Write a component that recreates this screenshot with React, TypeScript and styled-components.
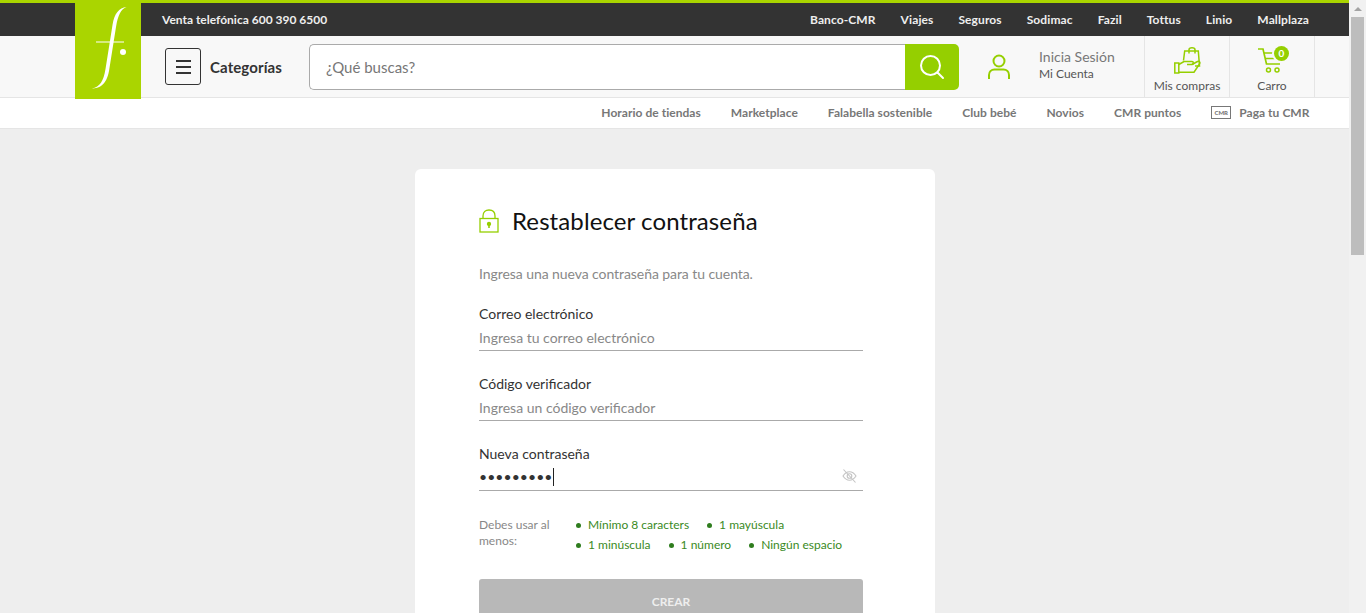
import React from 'react';
import styled, { createGlobalStyle } from 'styled-components';

const GlobalStyle = createGlobalStyle`
  html, body {
    margin: 0;
    height: 100%;
    overflow: hidden;
  }
  * {
    box-sizing: border-box;
  }
`;

const topLinks = ['Banco-CMR', 'Viajes', 'Seguros', 'Sodimac', 'Fazil', 'Tottus', 'Linio', 'Mallplaza'];
const subLinks = ['Horario de tiendas', 'Marketplace', 'Falabella sostenible', 'Club bebé', 'Novios', 'CMR puntos'];
const rules = ['Mínimo 8 caracters', '1 mayúscula', '1 minúscula', '1 número', 'Ningún espacio'];

const LogoMark = () => (
  <svg width="66" height="96" viewBox="0 0 66 96">
    <path
      d="M51.5 4C44 5 39.500 10 37.500 22L30.500 66C28.500 78 25 84 17 85.500C24 85.500 31.500 82 34 68L41 24C43 12 46 6 51.500 4Z"
      fill="#fff"
    />
    <rect x="21" y="38.500" width="28" height="1" fill="#fff" />
    <circle cx="48" cy="49" r="3" fill="#fff" />
  </svg>
);

const SearchIcon = () => (
  <svg width="26" height="26" viewBox="0 0 26 26" fill="none" stroke="#fff" strokeWidth="2">
    <circle cx="11.500" cy="11.500" r="9.500" />
    <path d="M18.500 18.500L24 24" strokeLinecap="round" />
  </svg>
);

const UserIcon = () => (
  <svg width="22" height="26" viewBox="0 0 22 26" fill="none" stroke="#95cf00" strokeWidth="2">
    <circle cx="11" cy="7" r="5.500" />
    <path d="M1 25V21C1 17.500 3.500 15.500 6.500 15.500H15.500C18.500 15.500 21 17.500 21 21V25" />
  </svg>
);

const BagIcon = () => (
  <svg width="27" height="27" viewBox="0 0 27 27" fill="none" stroke="#95cf00" strokeWidth="1.500">
    <path d="M9.500 13.500L10.700 4H24.300L25.500 19H21" />
    <path d="M15 6.500V2.800C15 1.500 16 0.800 18 0.800C20 0.800 21 1.500 21 2.800V6.500" />
    <rect x="0.800" y="16" width="4" height="10" />
    <path d="M4.800 17.500L10 14.500H18C19.800 14.500 19.800 17.500 18 17.500H13" />
    <path d="M18 17.500L23.500 14.500C25.500 13.800 26.500 15.500 25.500 17L20 25.200H4.800" />
  </svg>
);

const CartIcon = () => (
  <svg width="26" height="26" viewBox="0 0 26 26" fill="none" stroke="#95cf00" strokeWidth="1.500">
    <path d="M1 1H6L9.500 16H23" strokeWidth="1.700" />
    <path d="M7 5H24M8 10.500H24" />
    <circle cx="11.500" cy="22" r="2" />
    <circle cx="20" cy="22" r="2" />
  </svg>
);

const LockIcon = () => (
  <svg width="20" height="24" viewBox="0 0 20 24" fill="none" stroke="#95cf00" strokeWidth="1.300">
    <path d="M4 9.500V7C4 3 6.500 1 10 1C13.500 1 16 3 16 7V9.500" />
    <rect x="1" y="9.500" width="18" height="13.500" />
    <circle cx="10" cy="15" r="1.500" fill="#95cf00" />
    <path d="M10 16V19" strokeWidth="1.600" />
  </svg>
);

const EyeOffIcon = () => (
  <svg width="15" height="14" viewBox="0 0 15 14" fill="none" stroke="#c4c4c4" strokeWidth="1.100">
    <path d="M1 7C3 4 5 2.800 7.500 2.800C10 2.800 12 4 14 7C12 10 10 11.200 7.500 11.200C5 11.200 3 10 1 7Z" />
    <circle cx="7.500" cy="7" r="2.300" />
    <path d="M1.500 0.500L13.500 13.500" />
  </svg>
);

const App: React.FC = () => {
  return (
    <Viewport>
      <GlobalStyle />
      <Page>
        <Logo>
          <LogoMark />
        </Logo>
        <TopBar>
          <Phone>Venta telefónica 600 390 6500</Phone>
          <TopNav>
            {topLinks.map((link) => (
              <TopLink key={link}>{link}</TopLink>
            ))}
          </TopNav>
        </TopBar>
        <Header>
          <MenuButton>
            <MenuLine />
            <MenuLine />
            <MenuLine />
          </MenuButton>
          <MenuLabel>Categorías</MenuLabel>
          <Search>
            <SearchInput placeholder="¿Qué buscas?" />
            <SearchButton>
              <SearchIcon />
            </SearchButton>
          </Search>
          <Account>
            <UserIcon />
            <AccountText>
              <AccountTitle>Inicia Sesión</AccountTitle>
              <AccountSub>Mi Cuenta</AccountSub>
            </AccountText>
          </Account>
          <HeaderTile>
            <BagIcon />
            <TileLabel>Mis compras</TileLabel>
          </HeaderTile>
          <HeaderTile>
            <CartWrap>
              <CartIcon />
              <CartBadge>0</CartBadge>
            </CartWrap>
            <TileLabel>Carro</TileLabel>
          </HeaderTile>
        </Header>
        <SubNav>
          {subLinks.map((link) => (
            <SubLink key={link}>{link}</SubLink>
          ))}
          <SubLink>
            <CmrChip>CMR</CmrChip>
            Paga tu CMR
          </SubLink>
        </SubNav>
        <Main>
          <Card>
            <CardTitle>
              <LockIcon />
              <TitleText>Restablecer contraseña</TitleText>
            </CardTitle>
            <Intro>Ingresa una nueva contraseña para tu cuenta.</Intro>
            <Field>
              <FieldLabel>Correo electrónico</FieldLabel>
              <FieldInput placeholder="Ingresa tu correo electrónico" />
            </Field>
            <Field>
              <FieldLabel>Código verificador</FieldLabel>
              <FieldInput placeholder="Ingresa un código verificador" />
            </Field>
            <Field>
              <FieldLabel>Nueva contraseña</FieldLabel>
              <PasswordRow>
                <PasswordValue>•••••••••</PasswordValue>
                <EyeSlot>
                  <EyeOffIcon />
                </EyeSlot>
              </PasswordRow>
            </Field>
            <Rules>
              <RulesLabel>Debes usar al menos:</RulesLabel>
              <RulesList>
                {rules.map((rule) => (
                  <Rule key={rule}>{rule}</Rule>
                ))}
              </RulesList>
            </Rules>
            <SubmitButton>CREAR</SubmitButton>
          </Card>
        </Main>
      </Page>
      <Scrollbar>
        <ScrollArrow />
        <ScrollThumb />
      </Scrollbar>
    </Viewport>
  );
};

const Viewport = styled.div`
  display: flex;
  height: 100vh;
  overflow: hidden;
  font-family: 'Lato', sans-serif;
  background-color: #eeeeee;
`;

const Page = styled.div`
  position: relative;
  flex: 1;
  min-width: 0;
  overflow: hidden;
  border-top: 3px solid #aad500;
`;

const Logo = styled.div`
  position: absolute;
  top: 0;
  left: 75px;
  width: 66px;
  height: 96px;
  background-color: #aad500;
  z-index: 2;
`;

const TopBar = styled.div`
  display: flex;
  align-items: center;
  justify-content: space-between;
  height: 33px;
  padding: 0 40px 0 162px;
  background-color: #333333;
`;

const Phone = styled.span`
  color: #eeeeee;
  font-size: 12px;
  font-weight: 700;
`;

const TopNav = styled.div`
  display: flex;
  gap: 25px;
`;

const TopLink = styled.span`
  color: #eeeeee;
  font-size: 12px;
  font-weight: 700;
  letter-spacing: 0.1px;
`;

const Header = styled.div`
  display: flex;
  align-items: center;
  height: 62px;
  padding-left: 165px;
  background-color: #f8f8f8;
  border-bottom: 1px solid #e5e5e5;
`;

const MenuButton = styled.div`
  display: flex;
  flex-direction: column;
  align-items: center;
  justify-content: center;
  gap: 4px;
  width: 36px;
  height: 37px;
  border: 1px solid #333333;
  border-radius: 3px;
`;

const MenuLine = styled.span`
  width: 15px;
  height: 2px;
  background-color: #333333;
`;

const MenuLabel = styled.span`
  margin-left: 9px;
  width: 99px;
  color: #333333;
  font-size: 15px;
  font-weight: 700;
  letter-spacing: 0.1px;
`;

const Search = styled.div`
  display: flex;
  width: 650px;
  height: 46px;
`;

const SearchInput = styled.input`
  flex: 1;
  min-width: 0;
  padding: 0 16px;
  border: 1px solid #aaaaaa;
  border-right: none;
  border-radius: 5px 0 0 5px;
  outline: none;
  background-color: #ffffff;
  font-family: 'Lato', sans-serif;
  font-size: 15px;

  &::placeholder {
    color: #777777;
    opacity: 1;
  }
`;

const SearchButton = styled.div`
  display: flex;
  align-items: center;
  justify-content: center;
  width: 54px;
  background-color: #95cf00;
  border-radius: 0 5px 5px 0;
`;

const Account = styled.div`
  display: flex;
  align-items: center;
  gap: 29px;
  width: 185px;
  height: 100%;
  padding-left: 29px;
`;

const AccountText = styled.div`
  display: flex;
  flex-direction: column;
  gap: 1px;
  margin-bottom: 4px;
`;

const AccountTitle = styled.span`
  color: #777777;
  font-size: 14px;
`;

const AccountSub = styled.span`
  color: #555555;
  font-size: 12px;
`;

const HeaderTile = styled.div`
  display: flex;
  flex-direction: column;
  align-items: center;
  justify-content: flex-end;
  gap: 4px;
  width: 85px;
  height: 100%;
  padding-bottom: 4px;
  border-left: 1px solid #e5e5e5;

  &:last-child {
    border-right: 1px solid #e5e5e5;
    width: 86px;
  }
`;

const TileLabel = styled.span`
  color: #555555;
  font-size: 12px;
`;

const CartWrap = styled.div`
  position: relative;
  display: flex;
  margin-right: 4px;
`;

const CartBadge = styled.span`
  position: absolute;
  top: -2px;
  right: -6px;
  width: 15px;
  height: 15px;
  border-radius: 50%;
  background-color: #95cf00;
  color: #ffffff;
  font-size: 10px;
  font-weight: 700;
  line-height: 15px;
  text-align: center;
  box-shadow: 0 0 0 2px #f8f8f8;
`;

const SubNav = styled.div`
  display: flex;
  align-items: center;
  justify-content: flex-end;
  gap: 30px;
  height: 31px;
  padding: 0 39.5px 2px 0;
  background-color: #ffffff;
  border-bottom: 1px solid #e5e5e5;
`;

const SubLink = styled.span`
  display: flex;
  align-items: center;
  color: #777777;
  font-size: 12px;
  font-weight: 700;
  letter-spacing: 0.04px;
`;

const CmrChip = styled.span`
  width: 20px;
  height: 13px;
  margin-right: 8px;
  border: 1px solid #777777;
  color: #777777;
  font-size: 6px;
  font-weight: 900;
  line-height: 11px;
  letter-spacing: 0;
  text-align: center;
`;

const Main = styled.div`
  display: flex;
  justify-content: center;
  padding: 40px 0 0 1px;
`;

const Card = styled.div`
  width: 520px;
  padding: 37px 72px 0 64px;
  background-color: #ffffff;
  border-radius: 6px;
`;

const CardTitle = styled.div`
  display: flex;
  align-items: center;
  gap: 13px;
`;

const TitleText = styled.h1`
  margin: 0;
  color: #111111;
  font-size: 24px;
  font-weight: 400;
  line-height: 30px;
  letter-spacing: 0.1px;
`;

const Intro = styled.p`
  margin: 29px 0 0;
  color: #888888;
  font-size: 14px;
  line-height: 18px;
  letter-spacing: -0.07px;
`;

const Field = styled.div`
  display: flex;
  flex-direction: column;
  height: 70px;
  padding-top: 22px;

  &:first-of-type {
    margin-top: -1px;
  }
`;

const FieldLabel = styled.label`
  color: #333333;
  font-size: 14px;
  line-height: 18px;
`;

const FieldInput = styled.input`
  height: 28px;
  padding: 2px 0 0;
  border: none;
  border-bottom: 1px solid #aaaaaa;
  outline: none;
  background: transparent;
  font-family: 'Lato', sans-serif;
  font-size: 14px;

  &::placeholder {
    color: #888888;
    opacity: 1;
  }
`;

const PasswordRow = styled.div`
  display: flex;
  align-items: center;
  justify-content: space-between;
  height: 28px;
  padding-right: 6px;
  border-bottom: 1px solid #aaaaaa;
`;

const PasswordValue = styled.span`
  height: 18px;
  border-right: 1px solid #222222;
  color: #333333;
  font-size: 14px;
  line-height: 18px;
  letter-spacing: 0.05px;
`;

const EyeSlot = styled.span`
  display: flex;
  margin-bottom: 2px;
`;

const Rules = styled.div`
  display: flex;
  margin-top: 24px;
`;

const RulesLabel = styled.div`
  width: 97px;
  flex-shrink: 0;
  color: #888888;
  font-size: 12px;
  line-height: 16px;
`;

const RulesList = styled.div`
  display: flex;
  flex-wrap: wrap;
  column-gap: 18px;
  row-gap: 4px;
`;

const Rule = styled.div`
  display: flex;
  align-items: center;
  color: #3a8a1e;
  font-size: 12px;
  line-height: 16px;

  &::before {
    content: '';
    width: 5px;
    height: 5px;
    margin-right: 7px;
    border-radius: 50%;
    background-color: #2f7d1e;
  }
`;

const SubmitButton = styled.div`
  display: flex;
  align-items: center;
  justify-content: center;
  height: 46px;
  margin-top: 26px;
  padding-bottom: 2px;
  background-color: #b8b8b8;
  border-radius: 3px;
  color: #eeeeee;
  font-size: 12px;
  font-weight: 700;
`;

const Scrollbar = styled.div`
  display: flex;
  flex-direction: column;
  align-items: center;
  width: 17px;
  background-color: #f1f1f1;
`;

const ScrollArrow = styled.div`
  width: 0;
  height: 0;
  margin-top: 7px;
  border-left: 4px solid transparent;
  border-right: 4px solid transparent;
  border-bottom: 4px solid #a3a3a3;
`;

const ScrollThumb = styled.div`
  width: 13px;
  height: 238px;
  margin-top: 6px;
  background-color: #bdbdbd;
`;

export default App;
